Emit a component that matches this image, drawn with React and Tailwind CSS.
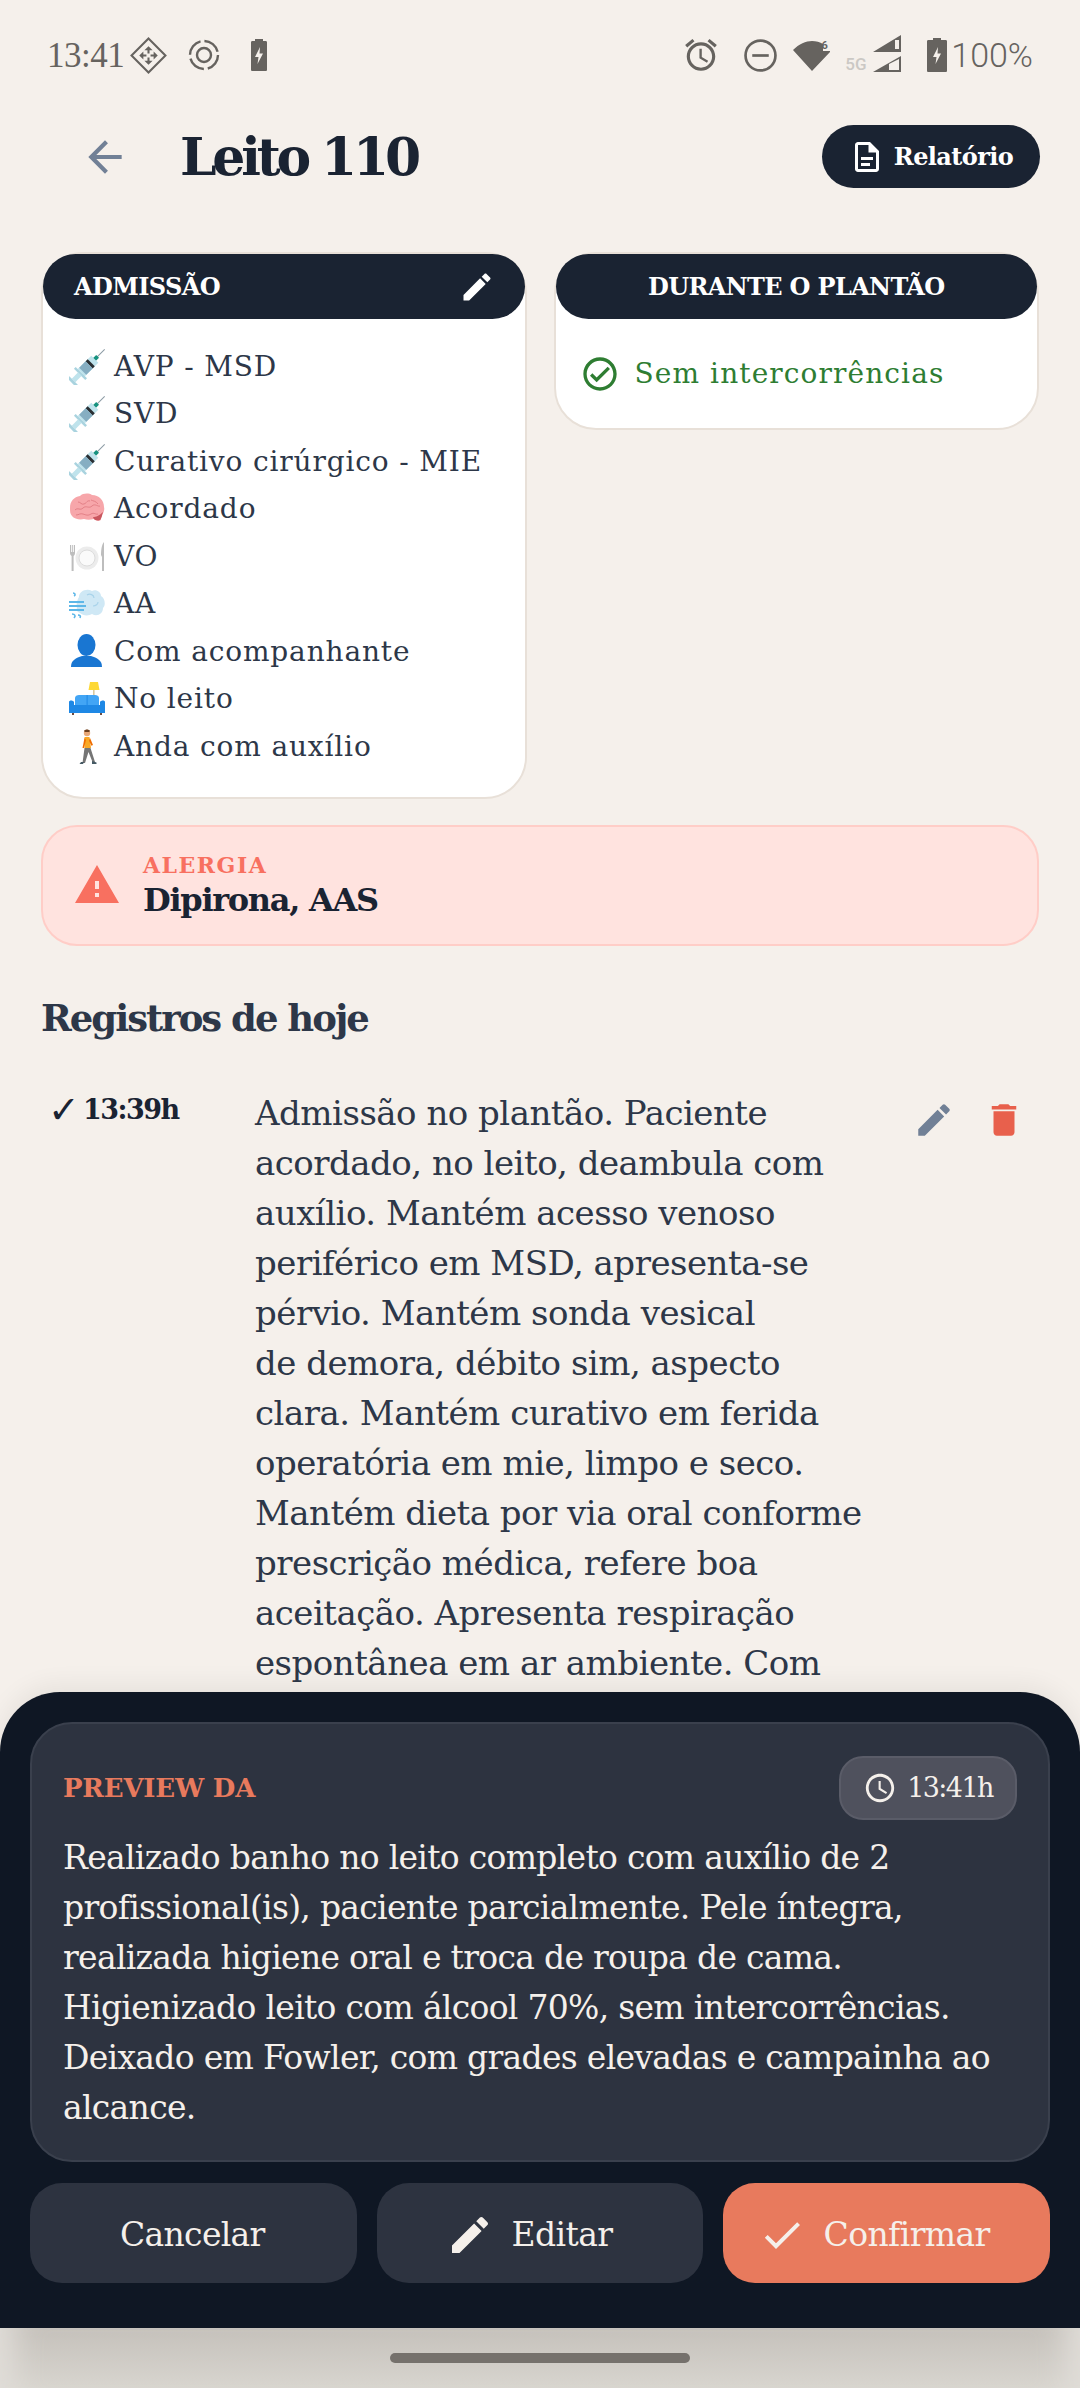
import React from "react";

const M = ({ d, className }) => (
  <svg viewBox="0 0 24 24" className={className} fill="currentColor"><path d={d} /></svg>
);
const PENCIL = "M3 17.25V21h3.75L17.81 9.94l-3.75-3.75L3 17.25zM20.71 7.04c.39-.39.39-1.02 0-1.41l-2.34-2.34c-.39-.39-1.02-.39-1.41 0l-1.83 1.83 3.75 3.75 1.83-1.83z";
const TRASH = "M6 19c0 1.1.9 2 2 2h8c1.1 0 2-.9 2-2V7H6v12zM19 4h-3.5l-1-1h-5l-1 1H5v2h14V4z";
const WARN = "M1 21h22L12 2 1 21zm12-3h-2v-2h2v2zm0-4h-2v-4h2v4z";
const CHECKC = "M12 2C6.48 2 2 6.48 2 12s4.48 10 10 10 10-4.48 10-10S17.52 2 12 2zm0 18c-4.41 0-8-3.59-8-8s3.59-8 8-8 8 3.59 8 8-3.59 8-8 8zm4.59-12.42L10 14.17l-2.59-2.58L6 13l4 4 8-8z";
const CHECK = "M9 16.17L4.83 12l-1.42 1.41L9 19 21 7l-1.41-1.41z";
const BACK = "M20 11H7.83l5.59-5.59L12 4l-8 8 8 8 1.41-1.41L7.83 13H20v-2z";
const CLOCK = "M11.99 2C6.47 2 2 6.48 2 12s4.47 10 9.99 10C17.52 22 22 17.52 22 12S17.52 2 11.99 2zM12 20c-4.42 0-8-3.58-8-8s3.58-8 8-8 8 3.58 8 8-3.58 8-8 8zm.5-13H11v6l5.25 3.15.75-1.23-4.5-2.67z";
const DOC = "M8 16h6v2H8zm0-4h8v2H8zm6-10H6c-1.1 0-2 .9-2 2v16c0 1.1.89 2 1.99 2H18c1.1 0 2-.9 2-2V8l-6-6zm4 18H6V4h7v5h5v11z";

const Syringe = () => (
  <svg viewBox="0 0 36 36" className="w-[36px] h-[36px] shrink-0">
    <g transform="rotate(45 18 18)">
      <rect x="17.5" y="-7" width="1" height="12" fill="#8a9aa3" />
      <rect x="16" y="3" width="4" height="5" fill="#16927f" />
      <rect x="13" y="7" width="10" height="19" fill="#bfe3ec" />
      <rect x="13" y="12" width="10" height="3" fill="#2b2f33" />
      <rect x="13" y="15" width="10" height="9" fill="#86aec2" />
      <rect x="10" y="26" width="16" height="2.5" fill="#a9d3df" />
      <rect x="15.5" y="28" width="5" height="9" fill="#bfe3ec" />
      <rect x="12" y="37" width="12" height="3" fill="#a9d3df" />
    </g>
  </svg>
);
const Brain = () => (
  <svg viewBox="0 0 36 36" className="w-[36px] h-[36px] shrink-0">
    <path d="M1 17c0-7 4-11 10-12 3-3 9-3 12-1 7 0 12 5 12 12 1 4-1 7-3 9l0 4c-2 1-5 1-7-1-4 1-7 1-10 0-4 1-10 0-12-3-2-2-2-5-2-8z" fill="#f7a6aa" />
    <path d="M6 19c3-3 5 1 8-2s6 1 9-2 6 1 8 0M9 11c3 0 3 3 6 2s3-4 6-3M22 9c2 1 5 1 7 4M7 24c3 0 4-2 7-1s5 2 8 0 5 1 7 0" stroke="#e07c82" strokeWidth="0.9" fill="none" />
    <path d="M24 26c3 0 6-1 10-5-1 3-1 6-3 8-2 1-6 1-7-3z" fill="#c9565e" />
  </svg>
);
const Plate = () => (
  <svg viewBox="0 0 36 36" className="w-[36px] h-[36px] shrink-0">
    <circle cx="18" cy="19" r="11.5" fill="#ececec" />
    <circle cx="18" cy="19" r="8" fill="#fafafa" stroke="#dcdcdc" strokeWidth="1" />
    <path d="M1 6v8c0 1.5 1 2.5 1.6 3v15h2V17c.6-.5 1.4-1.5 1.4-3V6h-1v7h-.8V6h-1v7h-1V6z" fill="#bdbdbd" />
    <path d="M33 32h2V3c-2 2-3 7-3 13l1 2z" fill="#bdbdbd" />
  </svg>
);
const Wind = () => (
  <svg viewBox="0 0 36 36" className="w-[36px] h-[36px] shrink-0">
    <path d="M10 11c0-6 8-9 13-6 4-2 9 1 9 5 4 2 5 9 2 12 0 6-6 9-11 6-3 2-9 2-12-1-3-1-4-3-3-5-1-3 0-8 2-11z" fill="#cfe8f5" />
    <path d="M18 9c3-2 7 0 7 3M24 20c3 0 5-2 5-4" stroke="#a9d3ea" strokeWidth="1.2" fill="none" />
    <path d="M0 15h15v2H0zM0 19h17v2H0zM0 23h15v2H0z" fill="#5db7e8" />
    <path d="M4 7c2 0 3 2 1 3M3 28c3 0 4 2 2 4M9 29c2 0 3 1 2 3" stroke="#5db7e8" strokeWidth="1.6" fill="none" />
  </svg>
);
const Person = () => (
  <svg viewBox="0 0 36 36" className="w-[36px] h-[36px] shrink-0">
    <ellipse cx="17.5" cy="11" rx="9" ry="11" fill="#1976d2" />
    <path d="M2 33c0-7 5-9 11-11h9c6 2 11 4 11 11z" fill="#1976d2" />
  </svg>
);
const Couch = () => (
  <svg viewBox="0 0 36 36" className="w-[36px] h-[36px] shrink-0">
    <rect x="24" y="9" width="1.6" height="12" fill="#d8c9a0" />
    <path d="M21 1h8l1.5 8h-11z" fill="#fdd835" />
    <path d="M6 17c0-2 2-3 4-3h16c2 0 4 1 4 3v8H6z" fill="#42a5f5" />
    <rect x="17.6" y="14" width="1" height="11" fill="#1e88e5" />
    <path d="M0 21c0-2 4-2 5 0v3h26v-3c1-2 5-2 5 0v11H0z" fill="#1e88e5" />
    <rect x="3" y="32" width="2" height="2" fill="#6d4c41" />
    <rect x="31" y="32" width="2" height="2" fill="#6d4c41" />
  </svg>
);
const Walker = () => (
  <svg viewBox="0 0 36 36" className="w-[36px] h-[36px] shrink-0">
    <circle cx="18" cy="4" r="3.2" fill="#e8a878" />
    <path d="M15 2c1-2 5-2 6 0l-1 1-4 0z" fill="#6d3f1f" />
    <path d="M15.5 8h5l1.5 11h-6.5z" fill="#f9a825" />
    <path d="M15.5 9l-2 10h1.5l2-8z" fill="#ef6c00" />
    <path d="M21 9l3 7-1.6.8-2.4-5z" fill="#ef6c00" />
    <path d="M15.5 19h6l4.5 14h-2.5l-4-10-3.5 11h-2.5z" fill="#757575" />
    <path d="M23 32l4.5 1.5V35H23zM12 33h3l-1 2h-3.5z" fill="#455a64" />
  </svg>
);

const items = [
  [Syringe, "AVP - MSD"],
  [Syringe, "SVD"],
  [Syringe, "Curativo cirúrgico - MIE"],
  [Brain, "Acordado"],
  [Plate, "VO"],
  [Wind, "AA"],
  [Person, "Com acompanhante"],
  [Couch, "No leito"],
  [Walker, "Anda com auxílio"],
];

const registro = [
  "Admissão no plantão. Paciente",
  "acordado, no leito, deambula com",
  "auxílio. Mantém acesso venoso",
  "periférico em MSD, apresenta-se",
  "pérvio. Mantém sonda vesical",
  "de demora, débito sim, aspecto",
  "clara. Mantém curativo em ferida",
  "operatória em mie, limpo e seco.",
  "Mantém dieta por via oral conforme",
  "prescrição médica, refere boa",
  "aceitação. Apresenta respiração",
  "espontânea em ar ambiente. Com",
  "acompanhante, sem queixas.",
];

const preview = [
  "Realizado banho no leito completo com auxílio de 2",
  "profissional(is), paciente parcialmente. Pele íntegra,",
  "realizada higiene oral e troca de roupa de cama.",
  "Higienizado leito com álcool 70%, sem intercorrências.",
  "Deixado em Fowler, com grades elevadas e campainha ao",
  "alcance.",
];

const StatusBar = () => (
  <div className="h-[110px] pl-[47px] pr-[47px] flex items-center justify-between text-[#66635f]">
    <div className="flex items-center">
      <span className="font-['Liberation_Serif',serif] text-[35px] leading-none w-[83px] tracking-[-0.5px]">13:41</span>
      <svg viewBox="0 0 36 36" className="w-[37px] h-[37px]" fill="none" stroke="currentColor">
        <path d="M18 1.5 34.5 18 18 34.5 1.5 18z" strokeWidth="2" />
        <path d="M18 9l4 4h-3v3h-2v-3h-3zM18 27l-4-4h3v-3h2v3h3zM9 18l4-4v3h3v2h-3v3zM27 18l-4 4v-3h-3v-2h3v-3z" fill="currentColor" stroke="none" />
      </svg>
      <svg viewBox="0 0 32 32" className="w-[32px] h-[32px] ml-[21px]" fill="none" stroke="currentColor" strokeWidth="2.4">
        <circle cx="16" cy="16" r="7" />
        <circle cx="16" cy="16" r="14" strokeDasharray="18 4" />
      </svg>
      <svg viewBox="0 0 18 32" className="w-[18px] h-[32px] ml-[30px]">
        <path d="M5 2V0h8v2h2.5c1 0 1.5.5 1.5 1.5v27c0 1-.5 1.5-1.5 1.5h-13C1.500 32 1 31.500 1 30.500v-27C1 2.500 1.500 2 2.500 2z" fill="currentColor" />
        <path d="M10 8l-5 10h3.500l-1 7 5.500-10.500H9.500z" fill="#f5f0eb" />
      </svg>
    </div>
    <div className="flex items-center">
      <svg viewBox="0 0 24 24" className="w-[38px] h-[38px]" fill="currentColor">
        <path d="M22 5.720l-4.600-3.860-1.290 1.530 4.600 3.860L22 5.720zM7.880 3.390L6.600 1.860 2 5.710l1.290 1.530 4.590-3.850zM12.500 8H11v6l4.750 2.850.75-1.230-4-2.370V8zM12 4c-4.970 0-9 4.030-9 9s4.030 9 9 9 9-4.030 9-9-4.030-9-9-9zm0 16c-3.870 0-7-3.130-7-7s3.130-7 7-7 7 3.130 7 7-3.130 7-7 7z" />
      </svg>
      <svg viewBox="0 0 32 32" className="w-[33px] h-[33px] ml-[24px]" fill="none" stroke="currentColor" strokeWidth="2.600">
        <circle cx="16" cy="16" r="14.500" />
        <path d="M8 16h16" />
      </svg>
      <svg viewBox="0 0 38 32" className="w-[38px] h-[32px] ml-[16px]" fill="currentColor">
        <path d="M0 11C6 5 13 2 19 2c4 0 8 1 11 3v7h7v1L19 32z" />
        <text x="28.500" y="10" fontSize="11" fontWeight="700" fontFamily="Roboto, sans-serif">6</text>
      </svg>
      <span className="font-['Roboto',sans-serif] font-medium text-[17px] leading-none text-[#cbc8c4] ml-[14px] self-end mb-[1px] w-[28px]">5G</span>
      <svg viewBox="0 0 29 38" className="w-[29px] h-[38px] -mt-[2px]" fill="currentColor">
        <path d="M0 17 28 0v17zM22 5v9h4V5z" fillRule="evenodd" />
        <path d="M0 37 28 21v16zM16 29v6h10v-11z" fillRule="evenodd" />
      </svg>
      <svg viewBox="0 0 20 34" className="w-[20px] h-[34px] ml-[25px]">
        <path d="M6 2V0h8v2h4.500c1 0 1.500.5 1.500 1.500v29c0 1-.5 1.500-1.500 1.500h-17C.5 34 0 33.500 0 32.500v-29C0 2.500.5 2 1.500 2z" fill="currentColor" />
        <path d="M11 9l-5 10h3.500l-1 7 5.500-10.500h-3.500z" fill="#f5f0eb" />
      </svg>
      <span className="font-['Roboto',sans-serif] font-light text-[34px] leading-none ml-[4px]">100%</span>
    </div>
  </div>
);

export default function App() {
  return (
    <div className="relative h-[2388px] w-[1080px] overflow-hidden bg-[#f5f0eb] font-['DejaVu_Serif',serif]">
      <StatusBar />

      <header className="h-[63px] mt-[15px] pl-[80px] pr-[40px] flex items-center">
        <M d={BACK} className="w-[50px] h-[50px] text-[#718096] shrink-0" />
        <h1 className="ml-[50px] text-[52px] leading-none font-bold text-[#1a2332] tracking-[-4.2px]">Leito 110</h1>
        <button className="ml-auto h-[63px] w-[218px] rounded-full bg-[#1a2332] text-white flex items-center justify-center gap-[9px]">
          <M d={DOC} className="w-[36px] h-[36px]" />
          <span className="text-[24px] font-bold tracking-[-0.6px]">Relatório</span>
        </button>
      </header>

      <div className="mt-[64px] px-[41px] grid grid-cols-2 gap-[27px] items-start">
        <section className="bg-white rounded-[42px] border-2 border-[#e8e0d8]">
          <div className="h-[65px] rounded-[40px] bg-[#1a2332] text-white flex items-center justify-between pl-[31px] pr-[30px]">
            <span className="text-[24px] font-bold tracking-[-0.6px]">ADMISSÃO</span>
            <M d={PENCIL} className="w-[36px] h-[36px]" />
          </div>
          <ul className="pt-[24px] pb-[26px] pl-[26px]">
            {items.map(([Icon, label], i) => (
              <li key={i} className="h-[47.5px] flex items-center gap-[9px] text-[28px] text-[#2d3748] tracking-[0.85px]">
                <Icon />
                <span>{label}</span>
              </li>
            ))}
          </ul>
        </section>

        <section className="bg-white rounded-[42px] border-2 border-[#e8e0d8] h-[178px]">
          <div className="h-[65px] rounded-[40px] bg-[#1a2332] text-white flex items-center justify-center">
            <span className="text-[24px] font-bold tracking-[-0.65px]">DURANTE O PLANTÃO</span>
          </div>
          <div className="h-[110px] pl-[24px] flex items-center gap-[15px] text-[#2e7d32]">
            <M d={CHECKC} className="w-[40px] h-[40px] shrink-0" />
            <span className="text-[28px] tracking-[1.1px]">Sem intercorrências</span>
          </div>
        </section>
      </div>

      <div className="mx-[41px] mt-[26px] h-[121px] rounded-[36px] border-2 border-[#ffcdc7] bg-[#ffe3df] flex items-center pl-[30px] gap-[22px]">
        <M d={WARN} className="w-[48px] h-[48px] text-[#f87060] shrink-0" />
        <div className="flex flex-col">
          <span className="text-[22px] leading-[30px] font-bold text-[#f87060] tracking-[1.5px]">ALERGIA</span>
          <span className="text-[32px] leading-[40px] font-bold text-[#1a2332] tracking-[-1.3px]">Dipirona, AAS</span>
        </div>
      </div>

      <h2 className="mx-[41px] mt-[48px] text-[37px] leading-[48px] font-bold text-[#2d3748] tracking-[-2px]">Registros de hoje</h2>

      <div className="mt-[54px] pl-[48px] pr-[55px] flex items-start">
        <div className="w-[207px] shrink-0 flex items-center h-[30px] -mt-[1px] text-[#1a2332] font-bold">
          <span className="text-[38px] leading-none font-['DejaVu_Sans',sans-serif] w-[35px]">✓</span>
          <span className="text-[27px] leading-none tracking-[-1.5px]">13:39h</span>
        </div>
        <p className="flex-1 text-[34px] leading-[50px] -mt-[8px] text-[#2d3748] tracking-[-0.5px] whitespace-nowrap">
          {registro.map((l, i) => (
            <span key={i} className="block">{l}</span>
          ))}
        </p>
        <div className="flex items-center gap-[28px] shrink-0 mt-[3px]">
          <M d={PENCIL} className="w-[42px] h-[42px] text-[#718096]" />
          <M d={TRASH} className="w-[42px] h-[42px] text-[#e8604c]" />
        </div>
      </div>

      <div className="absolute left-0 right-0 bottom-[60px] bg-[#0f1724] rounded-t-[60px] pt-[30px] px-[30px] pb-[45px] shadow-[0_-8px_24px_rgba(0,0,0,0.06)]">
        <div className="h-[440px] rounded-[42px] bg-[#2d3340] border-2 border-[#3a404d] pl-[31px] pr-[31px] pt-[32px]">
          <div className="flex items-center justify-between h-[64px]">
            <span className="text-[26px] font-bold text-[#e87a5d] tracking-[-0.2px]">PREVIEW DA</span>
            <span className="h-[64px] w-[178px] rounded-[24px] bg-[#4f515d] border-2 border-[#5a5c68] text-[#f5f0eb] flex items-center justify-center gap-[10px]">
              <M d={CLOCK} className="w-[34px] h-[34px]" />
              <span className="text-[27px] tracking-[-1.6px]">13:41h</span>
            </span>
          </div>
          <p className="mt-[13px] text-[33px] leading-[50px] text-[#f5f0eb] tracking-[-0.7px] whitespace-nowrap">
            {preview.map((l, i) => (
              <span key={i} className="block">{l}</span>
            ))}
          </p>
        </div>
        <div className="mt-[21px] grid grid-cols-3 gap-[20px]">
          <button className="h-[100px] pt-[3px] pr-[2px] rounded-[32px] bg-[#2d3340] text-[#f5f0eb] text-[33px] tracking-[-0.7px] flex items-center justify-center">Cancelar</button>
          <button className="h-[100px] pt-[3px] pr-[22px] rounded-[32px] bg-[#2d3340] text-[#f5f0eb] text-[33px] tracking-[-0.6px] flex items-center justify-center gap-[18px]">
            <M d={PENCIL} className="w-[48px] h-[48px]" />Editar
          </button>
          <button className="h-[100px] pt-[3px] pr-[26px] rounded-[32px] bg-[#e87a5d] text-[#f5f0eb] text-[33px] tracking-[-0.6px] flex items-center justify-center gap-[18px]">
            <M d={CHECK} className="w-[48px] h-[48px]" />Confirmar
          </button>
        </div>
      </div>

      <div className="absolute left-0 right-0 bottom-0 h-[60px] bg-linear-to-b from-[#c5c1bb] to-[#d8d5cf] shadow-[inset_40px_0_30px_-25px_#e0ddd8,inset_-40px_0_30px_-25px_#e0ddd8] flex justify-center pt-[25px]">
        <div className="w-[300px] h-[10px] rounded-full bg-[#75716c]" />
      </div>
    </div>
  );
}
